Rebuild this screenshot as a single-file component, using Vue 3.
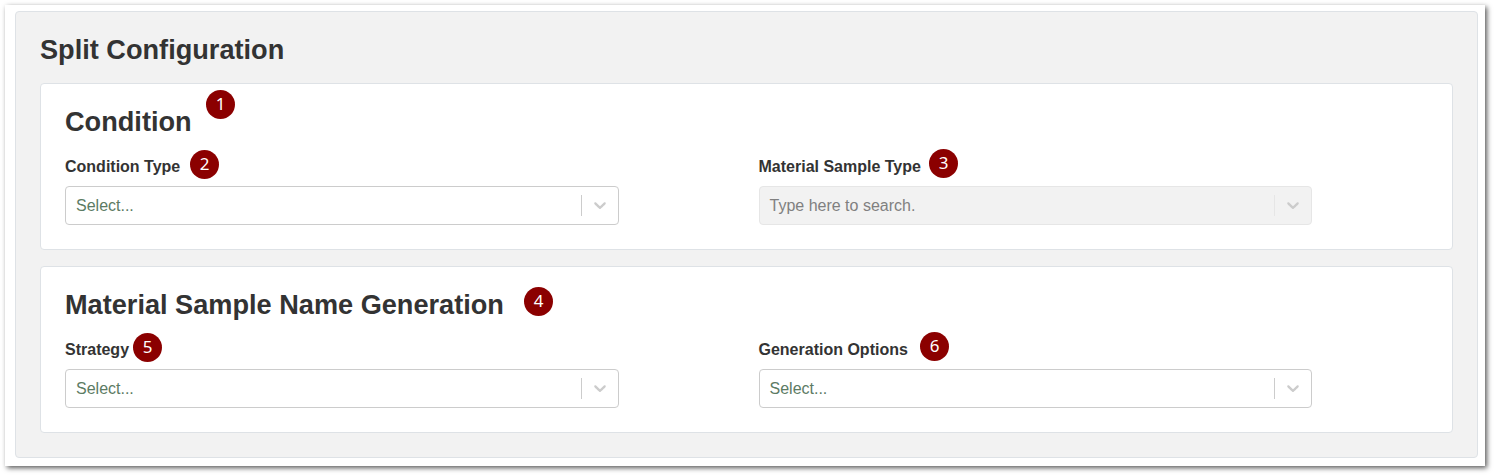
<script setup>
const sections = [
  {
    title: 'Condition',
    fields: [
      { label: 'Condition Type', placeholder: 'Select...' },
      { label: 'Material Sample Type', placeholder: 'Type here to search.', disabled: true },
    ],
  },
  {
    title: 'Material Sample Name Generation',
    fields: [
      { label: 'Strategy', placeholder: 'Select...' },
      { label: 'Generation Options', placeholder: 'Select...' },
    ],
  },
]

// Callout markers float freely over the form; x and y are relative to the sheet.
const markers = [
  { n: 1, x: 201, y: 85 },
  { n: 2, x: 185, y: 145 },
  { n: 3, x: 924, y: 144 },
  { n: 4, x: 519, y: 282 },
  { n: 5, x: 128, y: 328 },
  { n: 6, x: 915, y: 327 },
]
</script>

<template>
  <div class="page">
    <main class="sheet">
      <section class="panel">
        <h2 class="title">Split Configuration</h2>
        <section v-for="s in sections" :key="s.title" class="card">
          <h2 class="title">{{ s.title }}</h2>
          <div class="fields">
            <div v-for="f in s.fields" :key="f.label" class="field">
              <div class="label">{{ f.label }}</div>
              <div class="select" :class="{ disabled: f.disabled }">
                <span class="placeholder">{{ f.placeholder }}</span>
                <span class="separator"></span>
                <span class="indicator">
                  <svg width="20" height="20" viewBox="0 0 20 20" aria-hidden="true">
                    <path d="M4.516 7.548c0.436-0.446 1.043-0.481 1.576 0l3.908 3.747 3.908-3.747c0.533-0.481 1.141-0.446 1.574 0 0.436 0.445 0.408 1.197 0 1.615-0.406 0.418-4.695 4.502-4.695 4.502-0.217 0.223-0.502 0.335-0.787 0.335s-0.57-0.112-0.789-0.335c0 0-4.287-4.084-4.695-4.502s-0.436-1.17 0-1.615z" />
                  </svg>
                </span>
              </div>
            </div>
          </div>
        </section>
      </section>
      <span v-for="m in markers" :key="m.n" class="marker" :style="{ left: m.x + 'px', top: m.y + 'px' }">{{ m.n }}</span>
    </main>
  </div>
</template>

<style>
body {
  background: #fff;
}
</style>

<style scoped>
.page {
  box-sizing: border-box;
  height: 475px;
  padding: 5px 9px 9px 5px;
  overflow: hidden;
  font-family: "Liberation Sans", Arial, sans-serif;
  font-size: 16px;
  color: #333;
}
.sheet {
  position: relative;
  box-sizing: border-box;
  height: 461px;
  padding: 6px 7px 8px 10px;
  background: #fff;
  box-shadow: 2px 2px 5px rgba(0, 0, 0, 0.65);
}
.panel {
  box-sizing: border-box;
  height: 447px;
  padding: 21px 24px 0;
  background: #f2f2f2;
  border: 1px solid #dee2e6;
  border-radius: 4px;
}
.title {
  margin: 0;
  font-size: 27.15px;
  line-height: 34px;
  font-weight: 700;
}
.panel > .title {
  margin-bottom: 16px;
}
.card {
  box-sizing: border-box;
  height: 167px;
  margin-bottom: 16px;
  padding: 21px 24px 0;
  background: #fff;
  border: 1px solid #dee2e6;
  border-radius: 4px;
}
.fields {
  display: grid;
  grid-template-columns: 554px 553.5px;
  column-gap: 139.5px;
  margin-top: 16px;
}
.label {
  height: 31px;
  line-height: 24px;
  font-weight: 700;
}
.select {
  box-sizing: border-box;
  display: flex;
  align-items: center;
  height: 39px;
  border: 1px solid #ccc;
  border-radius: 4px;
}
.placeholder {
  flex: 1;
  padding-left: 10px;
  color: #5c7b64;
}
.separator {
  width: 1px;
  height: 21px;
  background: #ccc;
}
.indicator {
  display: flex;
  padding: 7px 8px 9px;
}
.indicator svg {
  fill: #ccc;
}
.disabled {
  background: #f2f2f2;
  border-color: #e6e6e6;
}
.disabled .placeholder {
  color: #808080;
}
.disabled .separator {
  background: #e6e6e6;
}
.marker {
  position: absolute;
  width: 29px;
  height: 29px;
  border-radius: 50%;
  background: #8b0000;
  color: #fff;
  font-family: "Noto Sans", sans-serif;
  font-size: 17px;
  line-height: 27px;
  text-align: center;
}
</style>
